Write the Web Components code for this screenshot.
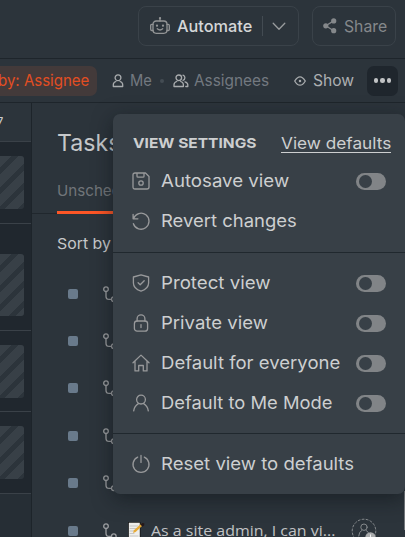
<!DOCTYPE html>
<html lang="en"><head><meta charset="utf-8"><title>View settings</title>
<style>html,body{margin:0;width:405px;height:537px;overflow:hidden;background:#2c343b}</style></head>
<body><workspace-page></workspace-page>
<script>
const icons = {
robot:['0 0 20 18','<rect x="3" y="4" width="14" height="12.3" rx="3.2"/><path d="M10 4V1M3 7.3H1.8Q.7 7.3.7 8.5v3.8q0 1.2 1.1 1.2H3M17 7.3h1.2q1.1 0 1.1 1.2v3.8q0 1.2-1.1 1.2H17M7.3 11.8q2.7 2.4 5.4 0"/><circle cx="10" cy="1.2" r=".5"/><circle cx="7" cy="8.7" r=".5"/><circle cx="13" cy="8.7" r=".5"/>'],
chev:['0 0 14 9','<path d="m1.2 1.3 5.8 6 5.8-6"/>'],
share:['0 0 14 16','<g fill="currentColor" stroke="none"><circle cx="10.7" cy="2.9" r="2.6"/><circle cx="2.8" cy="7.8" r="2.6"/><circle cx="10.7" cy="12.7" r="2.6"/></g><path d="m10.7 2.9-7.9 4.9 7.9 4.9"/>'],
me:['0 0 12 14','<circle cx="6" cy="3.8" r="2.9"/><path d="M3.9 7.5Q1.3 8.3 1.3 10.8v1.7h9.4v-1.7q0-2.5-2.6-3.3"/>'],
people:['0 0 16 14','<circle cx="5.8" cy="3.8" r="2.8"/><path d="M3.8 7.5Q1 8.3 1 10.8v1.7h9.4v-1.7q0-2.5-2.7-3.3M10 1.1a2.8 2.8 0 0 1 0 5.3M12 7.8q2.8.8 2.8 3v1.7h-2"/>'],
eye:['0 0 12 10','<path d="M.7 5Q3.2.8 6 .8T11.3 5Q8.8 9.2 6 9.2T.7 5Z"/><circle cx="6" cy="5" r=".6" fill="currentColor"/>'],
save:['0 0 18 18','<path d="M1 3Q1 1 3 1h10.5L17 4.5V15q0 2-2 2H3q-2 0-2-2ZM5 1v3.2q0 1 1 1h5q1 0 1-1V1"/><circle cx="9" cy="11" r="2.2"/>'],
revert:['0 0 18 18','<path d="M1.1 2.3v4.5h4.8M1.5 6.4A8 8 0 1 1 1.4 11.7"/>'],
shield:['0 0 18 18','<path d="M9 .9 16.6 3v6q0 5.6-7.6 8.2Q1.4 14.6 1.4 9V3ZM6.1 8.7l2.1 2.1 4-4.1"/>'],
lock:['0 0 18 18','<rect x="2.4" y="7" width="13.2" height="10.2" rx="2.7"/><path d="M5.1 7V4.8a3.9 3.9 0 0 1 7.8 0V7M9 10.6v3"/>'],
home:['0 0 18 18','<path d="m1 8.8 8-7.7 8 7.7M3 7.2v9.7h3.7v-5.4h4.6v5.4H15V7.2"/>'],
user:['0 0 18 18','<circle cx="9" cy="5.6" r="4.4"/><path d="M1.7 16.8q.7-4.9 4.7-7.2M11.6 9.6q4 2.3 4.7 7.2"/>'],
power:['0 0 18 18','<path d="M9 .4v7M5.7 2.1A8 8 0 1 0 12.3 2.1"/>'],
branch:['0 0 16 16','<circle cx="3" cy="3.2" r="2.3"/><path d="M3 5.5v4.7q0 3.2 3.2 3.2h2.3"/><circle cx="10.8" cy="13.2" r="2.3"/>'],
note:['0 0 18 17','<g stroke="none"><path fill="#111" d="M1 0h12.5v17H1z"/><path fill="#eeeeec" d="M1.8.7h11v15.6h-11z"/><path d="M3 4h8M3 6.5h7M3 9h5M3 11.5h4M3 14h8" stroke="#bbb" stroke-width=".8"/><path fill="#e8ab35" d="m6 11 1-2.7 7.4-6.8 1.8 1.6-7.6 6.8Z"/><path fill="#241819" d="m13.2 2.5 1.7-1.5 2.4.2-.1 2-1.6 1.5Z"/></g>'],
assign:['0 0 26 26','<circle cx="13" cy="13" r="11.8" stroke-dasharray="2 2.1" stroke-width="1"/><circle cx="13" cy="9.2" r="3.2"/><path d="M7.7 18q.3-4.6 3.2-5.7M15.1 12.3q2.9 1.1 3.2 5.7"/><circle cx="19.5" cy="19.5" r="5.2" fill="#a8aaab" stroke="none"/><path d="M19.5 16.8v5.4M16.8 19.5h5.4" stroke="#eee"/>']};
function define(name, css, html, init){
  customElements.define(name, class extends HTMLElement{
    connectedCallback(){
      if(this.shadowRoot) return;
      const r=this.attachShadow({mode:'open'});
      r.innerHTML='<style>*{box-sizing:border-box}'+css+'</style>'+(typeof html==='function'?html(this):html);
      if(init) init(this,r);
    }
  });
}
define('ui-icon',':host{display:block;flex:none}svg{display:block;overflow:visible;fill:none;stroke:currentColor;stroke-width:var(--stroke,1.3);stroke-linecap:round;stroke-linejoin:round}',
 h=>{const [v,p]=icons[h.getAttribute('name')];const d=v.split(' ');return `<svg viewBox="${v}" width="${d[2]}" height="${d[3]}">${p}</svg>`});
define('ui-label',':host{display:block;flex:none;white-space:nowrap;line-height:1.3}span{display:inline-block;transform-origin:0 50%}','<span><slot></slot></span>',
 (h,r)=>{const w=+h.getAttribute('w'),s=r.querySelector('span');h.style.width=w+'px';s.style.transform=`scaleX(${w/s.offsetWidth})`});
define('ui-toggle',':host{display:block;flex:none;width:30px;height:17px;border-radius:9px;background:#818487;padding:2px 3px}i{display:block;width:12.5px;height:13px;border-radius:50%;background:#384047}','<i></i>');
define('outline-button',':host{display:flex;align-items:center;height:40px;border:1px solid #3a4249;border-radius:8px}','<slot></slot>');
define('top-bar',`:host{display:flex;align-items:flex-start;justify-content:flex-end;height:59px;padding:6px 9px 0 0;gap:13px;border-bottom:1px solid #1e252b;font-size:16.5px}
ui-label{padding-top:2px}
.auto{width:161px;padding-left:11px;color:#d5d7d8;font-weight:500}.auto ui-icon:first-child{color:#929495;margin-right:7px}.sep{width:1px;height:20px;background:#434b52;margin:0 9px 0 10px}.chev{color:#999c9e}
.share{width:84px;padding-left:10px;gap:7px;color:#85888b}`,
`<outline-button class="auto"><ui-icon name="robot"></ui-icon><ui-label w="75">Automate</ui-label><div class="sep"></div><ui-icon class="chev" name="chev"></ui-icon></outline-button>
<outline-button class="share"><ui-icon name="share"></ui-icon><ui-label w="43">Share</ui-label></outline-button>`);
define('filter-bar',`:host{display:flex;align-items:center;height:44px;border-bottom:1px solid #1e252b;font-size:16px;color:#737980}
.group{display:flex;align-items:center;flex:none;width:97px;height:30px;border-radius:0 7px 7px 0;background:#433a3a;color:#e34e22;justify-content:flex-end;padding-right:8px;margin-right:15px;overflow:hidden}
ui-icon{color:#a9acae}.me{margin:0 0 0 6px}.dot{flex:none;width:4px;height:4px;border-radius:50%;background:#444c53;margin:0 9px 0 8px}.as{margin:0 25px 0 5px}.show{color:#adb0b2;margin:0 13px 0 7px}
.more{display:flex;flex:none;width:31px;height:30px;border-radius:7px;background:#1f262d;align-items:center;justify-content:center;gap:2px}.more i{width:4.5px;height:4.5px;border-radius:50%;background:#c1c3c5}`,
`<div class="group"><ui-label w="91">by: Assignee</ui-label></div><ui-icon name="me"></ui-icon><ui-label class="me" w="22">Me</ui-label><div class="dot"></div><ui-icon name="people"></ui-icon><ui-label class="as" w="75">Assignees</ui-label><ui-icon name="eye"></ui-icon><ui-label class="show" w="41">Show</ui-label><div class="more"><i></i><i></i><i></i></div>`);
define('day-lane',`:host{display:flex;flex-direction:column;flex:none;width:32px;height:434px;border-right:1px solid #1d242a;background:#20272e;overflow:hidden}
header{height:39px;flex:none;background:#2c343b;border-bottom:1px solid #3a4148;color:#c9cbcd;font-size:13px;padding:10px 0 0;line-height:18px;text-indent:-4px}
section{flex:none;padding:14px 0 0;border-bottom:1px solid #3a4148}
section div{width:24px;border-radius:0 3px 3px 0;background:repeating-linear-gradient(135deg,#384047 0 8px,#2c343b 8px 13px,#384047 13px 14px)}
footer{flex:1;background:#262e35}`,
`<header>7</header><section style="height:82px"><div style="height:53px"></div></section><section style="height:107px;padding-top:30px"><div style="height:62px"></div></section><section style="height:81px"><div style="height:53px"></div></section><section style="height:82px"><div style="height:53px"></div></section><footer></footer>`);
define('task-row',`:host{display:flex;align-items:center;height:47.4px;flex:none;padding-left:36px;color:#c0c2c4}b{width:10px;height:10px;border-radius:2px;background:#697a8b;margin-right:25px}ui-icon{color:#9b9da0}`,
`<b></b><ui-icon name="branch"></ui-icon><slot></slot>`);
define('task-panel',`:host{display:flex;flex-direction:column;width:373px;height:434px;overflow:hidden;color:#c6c8ca}
:host>div{flex:none}
.title{font-size:23.5px;padding:25px 0 0 25px;height:74px}.tabs{height:37px;border-bottom:1px solid #20272d;padding-left:25px;color:#717579;font-size:15px}.tab{height:37px;width:100px;border-bottom:3px solid #fd5626;padding-top:4px}
.sort{height:56px;padding:20px 0 0 25px;font-size:15px}.note{margin:0 6px 0 8px}.last{font-size:15px;font-family:"Open Sans",sans-serif}.av{margin-left:16px;color:#85898c;--stroke:1}`,
`<div class="title"><ui-label w="63">Tasks</ui-label></div><div class="tabs"><div class="tab"><ui-label w="95">Unscheduled</ui-label></div></div><div class="sort"><ui-label w="54">Sort by</ui-label></div>
<task-row></task-row><task-row></task-row><task-row></task-row><task-row></task-row><task-row></task-row><task-row><ui-icon class="note" name="note"></ui-icon><ui-label class="last" w="184">As a site admin, I can vi...</ui-label><ui-icon class="av" name="assign"></ui-icon></task-row>`);
define('menu-row',`:host{display:flex;align-items:center;height:40px;padding:0 19px;color:#cdcfd0;font-size:17.5px}ui-icon{color:#98999b;margin-right:10.5px}ui-toggle{margin-left:auto}`,
h=>`<ui-icon name="${h.getAttribute('icon')}"></ui-icon><ui-label w="${h.getAttribute('w')}">${h.getAttribute('label')}</ui-label>${h.hasAttribute('toggle')?'<ui-toggle></ui-toggle>':''}`);
define('settings-menu',`:host{display:block;width:292px;height:380px;background:#384047;border-radius:7px;box-shadow:0 5px 20px rgba(10,15,20,.5);color:#cdcfd0}
header{display:flex;align-items:center;justify-content:space-between;height:47px;padding:11px 14px 0 20px}
.h{font-size:13.5px;font-weight:700;padding-top:1px}.d{font-size:16.3px;border-bottom:1px solid #cdcfd0;line-height:18px}hr{border:0;height:1px;background:#20282e;margin:0}.a{padding-bottom:11px}.b{padding:10px 0}.c{padding-top:10px}`,
`<header><ui-label class="h" w="123">VIEW SETTINGS</ui-label><ui-label class="d" w="110">View defaults</ui-label></header>
<div class="a"><menu-row icon="save" label="Autosave view" w="128" toggle></menu-row><menu-row icon="revert" label="Revert changes" w="136"></menu-row></div><hr>
<div class="b"><menu-row icon="shield" label="Protect view" w="110" toggle></menu-row><menu-row icon="lock" label="Private view" w="107" toggle></menu-row><menu-row icon="home" label="Default for everyone" w="179" toggle></menu-row><menu-row icon="user" label="Default to Me Mode" w="171" toggle></menu-row></div><hr>
<div class="c"><menu-row icon="power" label="Reset view to defaults" w="193"></menu-row></div>`);
define('workspace-page',`:host{display:block;position:relative;width:405px;height:537px;overflow:hidden;font-family:Inter,"Liberation Sans",sans-serif;background:#2c343b}
.body{display:flex}settings-menu{position:absolute;left:113px;top:114px}.scroll{position:absolute;right:0;top:491px;width:1px;height:39px;background:#74787c}`,
`<top-bar></top-bar><filter-bar></filter-bar><div class="body"><day-lane></day-lane><task-panel></task-panel></div><div class="scroll"></div><settings-menu></settings-menu>`);
</script></body></html>
